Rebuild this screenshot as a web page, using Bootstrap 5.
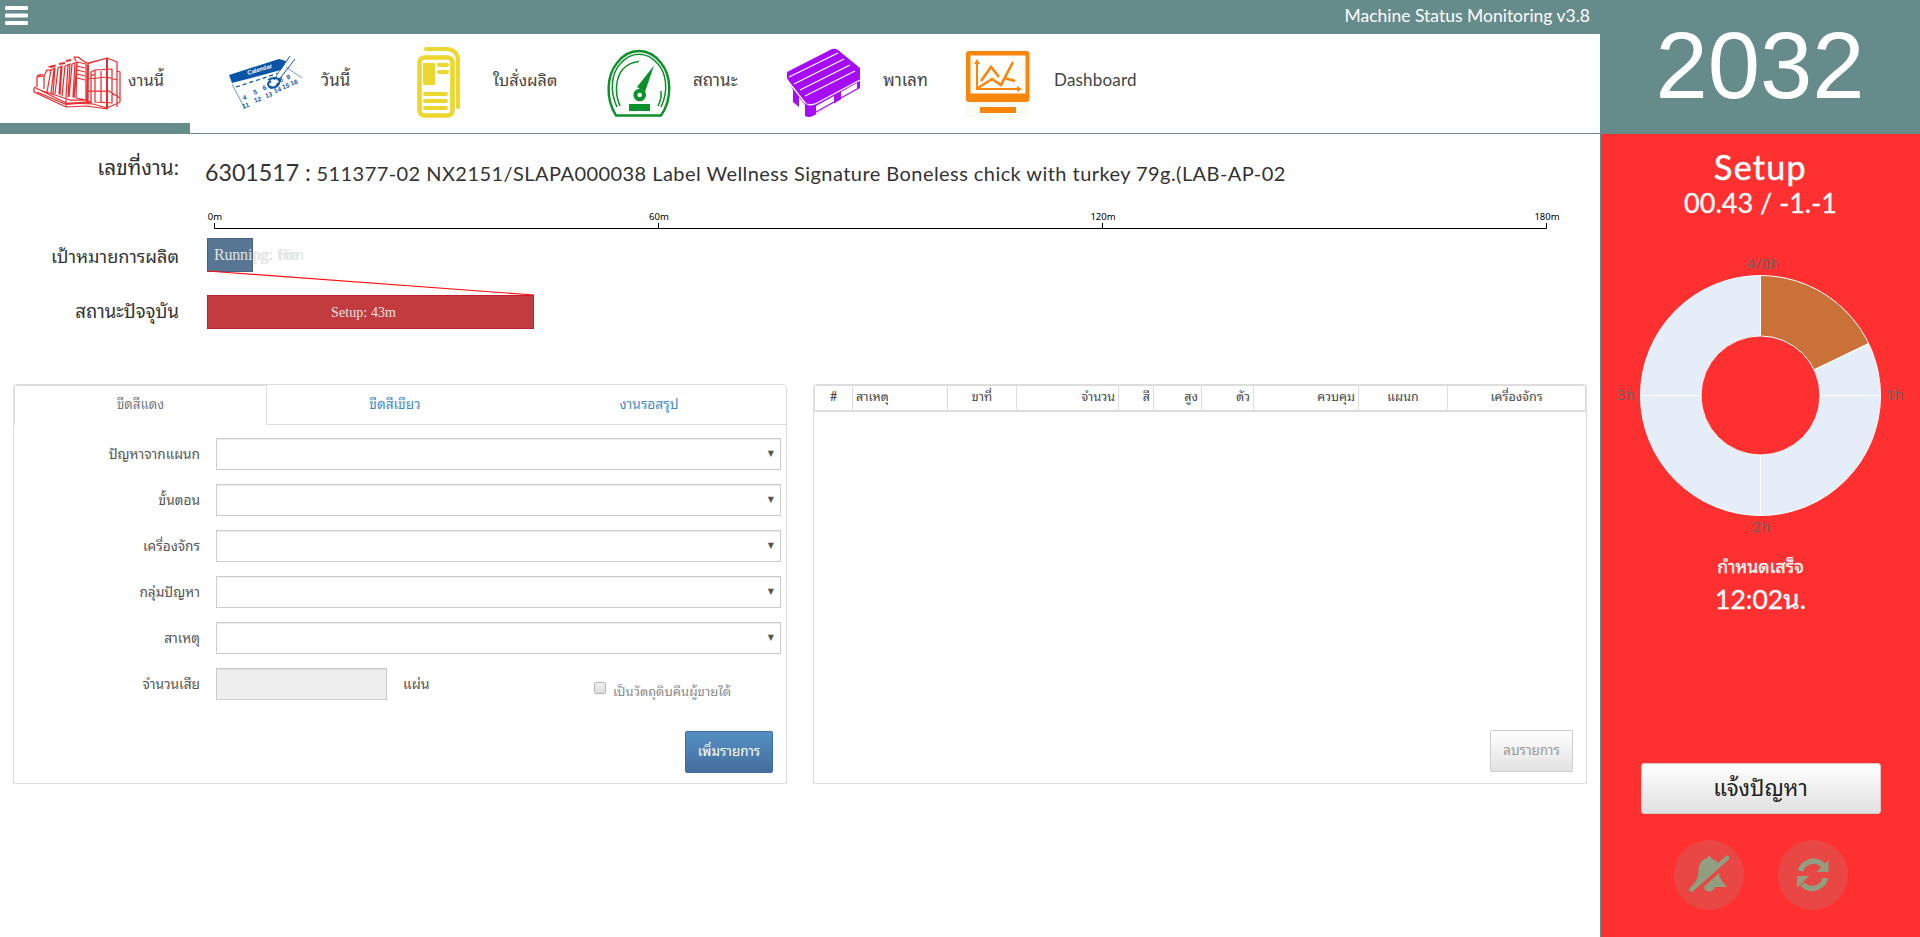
<!DOCTYPE html>
<html lang="th">
<head>
<meta charset="utf-8">
<meta name="viewport" content="width=device-width, initial-scale=1">
<title>Machine Status Monitoring v3.8</title>
<link rel="stylesheet" href="https://cdn.jsdelivr.net/npm/bootstrap@5.3.0/dist/css/bootstrap.min.css">
<style>
:root{--teal:#668b8b;--alarm:#ff3030;--line:#ddd}
html,body{height:937px;overflow:hidden}
body{font-family:Lato,"Noto Sans Thai Looped","Noto Looped Thai",Loma,Garuda,Waree,"Noto Sans Thai","Noto Sans",sans-serif;color:#333;font-size:14px;line-height:20px;background:#fff}
.workspace{width:1600px}
.sidepane{width:320px;background:var(--alarm);border-left:1px solid var(--teal);color:#fff}
.topbar{height:34px;background:var(--teal);color:#fff;padding:0 10px 0 5px}
.topbar .app-title{font-size:17.500px;line-height:34px;margin-top:-1px}
.tabs-main{height:100px;border-bottom:1px solid var(--teal)}
.tabs-main .nav-link{width:190px;height:99px;padding:0;color:#444;font-size:17px;line-height:24px;border-radius:0;border-bottom:0 solid var(--teal)}
.tabs-main .nav-link.active{border-bottom-width:10px}
.tabs-main .nav-link span{margin-top:34px}
.pic{flex:none}
.job{height:78px;padding-left:13px}
.tag{width:166px;text-align:right;flex:none}
.job-no{font-size:23.200px}.job-name{font-size:20px;letter-spacing:.44px;margin-left:2px}
.panel{width:774px;height:400px;border:1px solid var(--line);border-radius:4px 4px 1px 1px}
.subtabs{height:40px}
.subtabs .nav-link{height:40px;border:0 solid var(--line);border-bottom-width:1px;border-radius:0;color:#428bca;padding:9px 0 0;font-size:13.700px}
.subtabs .nav-link.active{color:#777;border-width:1px 1px 0 1px;font-size:13.300px;padding-top:8px}
.frm{padding-top:13px}
.frm .line-row{height:46px}
.frm label.cap{width:186px;text-align:right;color:#555;font-size:13.700px;line-height:32px}
.field{height:32px;border:1px solid #ccc;border-radius:0;box-shadow:inset 0 1px 1px rgba(0,0,0,.075);margin-left:16px;width:565px;padding:0 6px 2px 0}
.field.off{width:171px;background:#eee}
.arrow{font:8px "DejaVu Sans",sans-serif;color:#555}
.tick{width:12px;height:12px;border:1px solid #b5b5b5;border-radius:2px;background:linear-gradient(#f0f0f0,#ddd)}
.btn-add,.btn-drop{height:42px;border-radius:2px;font-size:13.400px;padding:0 0 1px}
.btn-add{width:88px;border:1px solid #3b6e9c;background:linear-gradient(#5490c4,#446e9b);color:#fff}
.btn-drop{width:83px;border:1px solid #ccc;background:linear-gradient(#fff,#e2e2e2);color:#999}
.grid-head{height:27px;border:1px solid var(--line);border-bottom-width:2px;font-size:12.500px;color:#444;line-height:18px}
.grid-head div{border-right:1px solid var(--line);padding:2px 3px}
.grid-head div:last-child{border:0}
.machine{height:134px;background:var(--teal);font:94px/131px "Liberation Sans",Arial,sans-serif;margin-left:-1px}
.state{font-size:34px;line-height:36px;letter-spacing:1.300px;-webkit-text-stroke:.5px #fff}
.times{font-size:27px;line-height:36px;-webkit-text-stroke:.3px #fff}
.btn-report{width:240px;height:51px;border:1px solid #ccc;border-radius:3px;background:linear-gradient(#fff,#e0e0e0);color:#222;font-size:22.200px;line-height:30px;padding:0 0 1px}
.disc{width:70px;height:70px;border-radius:50%;background:#e84743}
.side-in{margin-right:0}
</style>
</head>
<body class="d-flex">
<main class="workspace">
  <header class="topbar d-flex justify-content-between">
    <svg width="23" height="34"><g fill="#fff"><rect y="6" width="23" height="4" rx="1"/><rect y="13.500" width="23" height="4" rx="1"/><rect y="21" width="23" height="4" rx="1"/></g></svg>
    <span class="app-title">Machine Status Monitoring v3.8</span>
  </header>
  <nav class="tabs-main nav flex-nowrap">
    <a class="nav-link active d-flex" href="#">
      <svg class="pic" width="128" height="89" viewBox="0 34 128 89" fill="none" stroke="#ee2b2f" stroke-width="1.250" stroke-linejoin="round"><path d="M34 87l32 16 27 1 14 4 13-6V72l-3-1V62l-10-4-19 5v41M34 88v4l32 15 20-1 22 3M66 96v11M37 87V77l7-1v13M47 92l4-22 4-2-2 26M51 93l3-24M55 94l3-26 4-2-2 29M59 94l2-27M62 96l3-30 5-2-2 33M66 96l2-31M69 97l3-33 5-2-3 36M73 97l2-34M76 98l1-36 9 2v36l-10-2M76 61l-2-4h4l4 3 5 3M87 64l20-6v51M107 58l10 4v45M88 79l19-2 10 3M95 70l17-1v34l-17-1zM91 104v-32l4-2M107 90l13 8M88 91h19M91 76l4-2M40 90l30 10h18M48 67l8-2M77 66l8 2M77 70l8 2M77 74l8 2M77 78l8 2M101 71v31M37 92l28 12M44 76l3-6h4M37 77q1-3 6-2"/><path stroke-width="2" d="M50 67l5-1M59 64l6-1M66 61l5-1M107 59v50M88 65l-1 37M66 104l25-2M107 78v29"/></svg>
      <span style="font-size:16.500px">งานนี้</span>
    </a>
    <a class="nav-link d-flex" href="#">
      <svg class="pic" width="131" height="89" viewBox="190 34 131 89"><path fill="#0b55a8" d="M229 75l50-16 7 2-5 9-49 13z"/><g fill="none" stroke="#0b55a8"><path stroke-width=".6" d="M232 84l13 25M283 65l19 13"/><path stroke-width="1.300" stroke-dasharray="4 3" d="M236 87l43-14"/><path stroke-width="2" d="M268 80q7-4 12 0q-1 8-9 8q-6-4 0-7M269 86q7 4 9-3"/><path stroke-width="1" d="M274 80l16-24M278 81l17-22M282 71l10-13"/></g><path stroke="#fff" stroke-width="2.500" d="M278 76l15-20"/><g fill="#0b55a8" font-family="Liberation Sans" font-weight="700" font-size="6.500"><g transform="rotate(-18 245 105)"><text x="245" y="100">4</text><text x="257" y="98">5</text><text x="267" y="97">6</text><text x="242" y="108">11</text><text x="255" y="106">12</text><text x="267" y="105">13</text><text x="277" y="103">14</text><text x="286" y="102">15</text><text x="295" y="101">16</text><text x="285" y="94">8</text><text x="293" y="94">9</text></g></g><text x="248" y="75" transform="rotate(-17 248 75)" fill="#fff" font-family="Liberation Sans" font-weight="700" font-size="6">Calendar</text></svg>
      <span>วันนี้</span>
    </a>
    <a class="nav-link d-flex" href="#">
      <svg class="pic" width="113" height="89" viewBox="380 34 113 89" fill="none" stroke="#ebd72e"><rect x="419.500" y="57.500" width="33" height="58" rx="5" stroke-width="4.600"/><path stroke-width="4" stroke-linecap="round" d="M426 49h21q11 1 11 12v46M439 65h8M439 72h8M425 94h21M425 101h21M425 108h21"/><path fill="#ebd72e" stroke="none" d="M423 63h12v22h-12z"/></svg>
      <span style="font-size:16.300px">ใบสั่งผลิต</span>
    </a>
    <a class="nav-link d-flex" href="#">
      <svg class="pic" width="123" height="89" viewBox="570 34 123 89" fill="none" stroke="#0b9129"><path stroke-width="2.400" d="M616 115.500C605 98 607 75 617 63c12-16 32-16 44 0 10 12 12 35 0 52.500z"/><path stroke-width="1.500" d="M617 107c-8-17-5-34 3-43 11-13 27-13 38 0 8 9 11 26 3 43M620 106c-6-14-4-29 3-37q7-7 16-7.500M658 106q4-8 3-15"/><path fill="#0b9129" stroke="none" d="M629 104h21v7h-21z"/><path fill="#0b9129" stroke="none" d="M654 65.500L645 92l-8-5z"/><circle cx="639.700" cy="95" r="4.300" stroke-width="4" fill="#fff"/></svg>
      <span>สถานะ</span>
    </a>
    <a class="nav-link d-flex" href="#">
      <svg class="pic" width="123" height="89" viewBox="760 34 123 89"><path fill="#a60cf7" d="M787 72l45-23q3-1 6 1l22 18v20l-47 28q-5 2-8 0V105l-6-8v10l-6-5V90l-6-12z"/><path fill="none" stroke="#fff" stroke-width="1.300" d="M789 77l49-24M794 84l50-25M800 90l50-25M805 96l50-25M787 80l19 24M807 104q4 2 10-1l43-23"/><path fill="#fff" d="M816 106l18-10v8l-18 10zM841 92l16-9v8l-16 9z"/><path fill="none" stroke="#a60cf7" stroke-width="1.400" d="M816 112l18-10M841 98l16-9"/></svg>
      <span style="font-size:16.700px">พาเลท</span>
    </a>
    <a class="nav-link d-flex" href="#">
      <svg class="pic" width="104" height="89" viewBox="950 34 104 89"><path fill="#fbfbf5" d="M966 48h63v69h-63z"/><rect x="966" y="51" width="63.500" height="51" rx="3" fill="#f8860c"/><path fill="#fefefb" d="M970.500 55.500h55v38h-55z"/><path fill="#f8860c" d="M980 107h36v6h-36zM977 59l3 5h-6zM1022 89l-5-3v6z"/><g fill="none" stroke="#f8860c" stroke-width="2"><path d="M977 62v27h42"/><path stroke-width="2.600" d="M981 81l10-14 8 10M978 88l14-9 9 6 12-23M1004 78l11 3"/></g></svg>
      <span style="letter-spacing:.2px">Dashboard</span>
    </a>
  </nav>

  <section class="job d-flex">
    <div class="tag" style="font-size:20.800px;padding-top:19px;line-height:28px">เลขที่งาน:</div>
    <div class="text-nowrap" style="padding:22px 0 0 26px;line-height:32px"><span class="job-no">6301517 :</span> <span class="job-name">511377-02 NX2151/SLAPA000038 Label Wellness Signature Boneless chick with turkey 79g.(LAB-AP-02</span></div>
  </section>
  <section class="d-flex" style="height:172px;padding-left:13px">
    <div class="tag d-flex flex-column" style="padding-top:29px;line-height:30px;gap:25px;font-size:18.100px"><span>เป้าหมายการผลิต</span><span style="font-size:18.500px">สถานะปัจจุบัน</span></div>
    <svg width="1380" height="176" viewBox="200 208 1380 176" style="margin:-4px 0 0 21px">
      <g font-family="Noto Sans" font-size="9.500" text-anchor="middle" fill="#000"><text x="215" y="220">0m</text><text x="659" y="220">60m</text><text x="1103" y="220">120m</text><text x="1547" y="220">180m</text></g>
      <path d="M214.500 223v5.500h1332V223M658.500 223v5M1102.500 223v5" fill="none" stroke="#000"/>
      <rect x="207.500" y="238.500" width="45" height="33" fill="#567694" stroke="#4a6580"/>
      <rect x="207.500" y="295.500" width="326" height="33" fill="#c13b3f" stroke="#c0202a"/>
      <path d="M207 271l327 24" stroke="#ff1010" stroke-width="1.200"/>
      <g font-family="Liberation Serif" fill="#e3e3e3"><text x="214" y="260" font-size="16" textLength="90">Running: 16m</text><text x="253" y="260" font-size="16">pg: 6m</text><text x="331" y="317" font-size="14" textLength="65">Setup: 43m</text></g>
    </svg>
  </section>

  <section class="d-flex" style="padding-left:13px;gap:26px">
    <div class="panel">
      <nav class="subtabs nav flex-nowrap text-center">
        <a class="nav-link active" href="#" style="width:253px">ขีดสีแดง</a>
        <a class="nav-link" href="#" style="width:256px">ขีดสีเขียว</a>
        <a class="nav-link flex-fill" href="#" style="padding-right:11px">งานรอสรุป</a>
      </nav>
      <form class="frm">
        <div class="line-row d-flex"><label class="cap">ปัญหาจากแผนก</label><div class="field d-flex align-items-center justify-content-end"><span class="arrow">▼</span></div></div>
        <div class="line-row d-flex"><label class="cap">ขั้นตอน</label><div class="field d-flex align-items-center justify-content-end"><span class="arrow">▼</span></div></div>
        <div class="line-row d-flex"><label class="cap">เครื่องจักร</label><div class="field d-flex align-items-center justify-content-end"><span class="arrow">▼</span></div></div>
        <div class="line-row d-flex"><label class="cap">กลุ่มปัญหา</label><div class="field d-flex align-items-center justify-content-end"><span class="arrow">▼</span></div></div>
        <div class="line-row d-flex"><label class="cap">สาเหตุ</label><div class="field d-flex align-items-center justify-content-end"><span class="arrow">▼</span></div></div>
        <div class="d-flex" style="height:63px;color:#555"><label class="cap">จำนวนเสีย</label><div class="field off"></div><span style="width:207px;padding-left:16px;line-height:32px">แผ่น</span><span class="tick" style="margin-top:14px"></span><span style="margin:11px 0 0 7px;line-height:24px;color:#888;font-size:13px" class="text-nowrap">เป็นวัตถุดิบคืนผู้ขายได้</span></div>
        <div class="d-flex justify-content-end" style="padding-right:13px"><button type="button" class="btn btn-add">เพิ่มรายการ</button></div>
      </form>
    </div>
    <div class="panel d-flex flex-column justify-content-between">
      <div class="grid-head d-grid" style="grid-template-columns:38px 95px 69px 102px 35px 48px 52px 105px 89px 1fr">
        <div class="text-center">#</div><div>สาเหตุ</div><div class="text-center">ขาที่</div><div class="text-end">จำนวน</div><div class="text-end">สี</div><div class="text-end">สูง</div><div class="text-end">ตัว</div><div class="text-end">ควบคุม</div><div class="text-center">แผนก</div><div class="text-center">เครื่องจักร</div>
      </div>
      <div class="d-flex justify-content-end" style="padding:0 13px 11px"><button type="button" class="btn btn-drop">ลบรายการ</button></div>
    </div>
  </section>
</main>

<aside class="sidepane d-flex flex-column align-items-center">
  <div class="machine w-100 text-center">2032</div>
  <div class="state side-in" style="margin-top:15px">Setup</div>
  <div class="times side-in" style="margin-top:0;margin-bottom:1px">00.43 / -1.-1</div>
  <svg width="319" height="324" viewBox="1601 222 319 324">
    <circle cx="1760.500" cy="395.500" r="89.750" fill="none" stroke="#e4edf8" stroke-width="60.500"/>
    <path d="M1760.500 275.500A120 120 0 0 1 1868.800 343.800L1814.200 369.900A59.500 59.500 0 0 0 1760.500 336z" fill="#c97137"/>
    <g fill="none" stroke="#fff"><circle cx="1760.500" cy="395.500" r="120"/><circle cx="1760.500" cy="395.500" r="59.500"/><path d="M1760.500 275v61M1760.500 455v61M1640.500 395.500h61M1820 395.500h61"/><path stroke-width="1.600" d="M1868.800 343.800L1814.200 369.900"/></g>
    <g fill="#666" font-family="Noto Sans" font-size="14" letter-spacing=".7"><text x="1747" y="269">4/0h</text><text x="1886" y="400">1h</text><text x="1617" y="400">3h</text><text x="1752.500" y="532">2h</text></g>
  </svg>
  <div class="side-in" style="font-size:17.800px;line-height:30px;margin-top:5px;-webkit-text-stroke:.3px #fff">กำหนดเสร็จ</div>
  <div class="side-in" style="font-size:26.500px;line-height:36px;-webkit-text-stroke:.3px #fff">12:02น.</div>
  <button type="button" class="btn btn-report" style="margin-top:146px">แจ้งปัญหา</button>
  <div class="d-flex side-in" style="gap:34px;margin-top:26px;margin-left:1px">
    <span class="disc"><svg width="70" height="70" viewBox="1674 840 70 70"><g fill="#8f9f80"><path d="M1709 856c1.500 0 2 1 2.300 2.400 3 .6 5 2.200 6.700 4.600l-25 25c-1-1-1-2-.5-3 4-4 6-8 6-15 .3-6 3-10.600 8.200-11.600.3-1.400.8-2.400 2.300-2.400z"/><path d="M1719 873c.8 5.500 3 8.500 7 12.500.3 1-.3 1.500-1 1.500h-10.500a5.500 5.500 0 0 1-10.800 0z"/></g><path d="M1691.500 889.500l35.500-31.500" stroke="#8f9f80" stroke-width="4.600" stroke-linecap="round"/></svg></span>
    <span class="disc"><svg width="70" height="70" viewBox="1778 840 70 70"><g fill="none" stroke="#8f9f80" stroke-width="5.500"><path d="M1800.500 871c2-8 15-15 23-5M1825.500 878c-2 9-15 15-23 6"/></g><path fill="#8f9f80" d="M1828.500 860v12h-12zM1797 888v-12h12z"/></svg></span>
  </div>
</aside>
<script src="https://cdn.jsdelivr.net/npm/bootstrap@5.3.0/dist/js/bootstrap.bundle.min.js"></script>
</body>
</html>
